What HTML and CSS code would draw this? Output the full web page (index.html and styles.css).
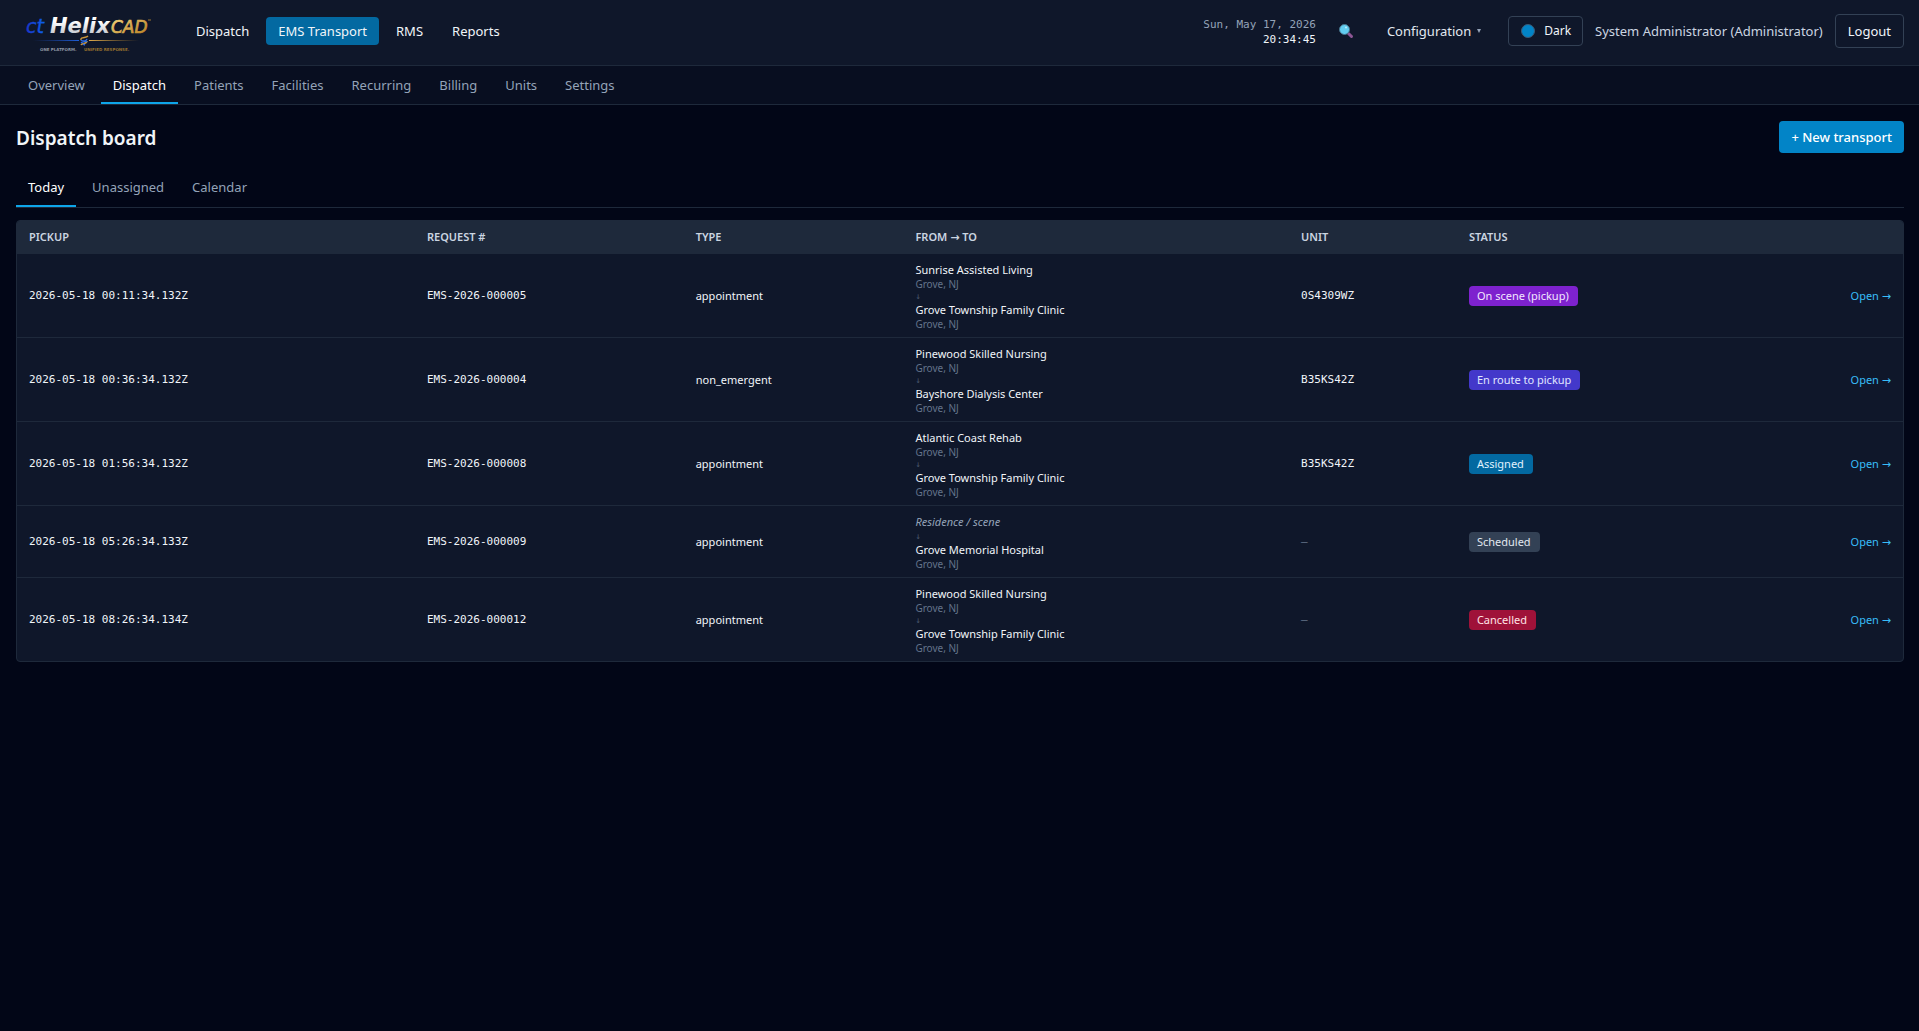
FILE: index.html
```html
<!DOCTYPE html>
<html lang="en">
<head>
<meta charset="utf-8">
<meta name="viewport" content="width=device-width, initial-scale=1">
<title>Dispatch board</title>
<link rel="stylesheet" href="styles.css">
</head>
<body>
<header class="topbar">
  <a class="logo" href="#" aria-label="ct HelixCAD">
    <svg width="138" height="48" viewBox="0 0 138 48">
      <defs>
        <linearGradient id="blue" x1="0" y1="0" x2="1" y2="0"><stop offset="0" stop-color="#1b35c8"/><stop offset="1" stop-color="#0b63ee"/></linearGradient>
        <linearGradient id="silver" x1="0" y1="0" x2="0" y2="1"><stop offset=".3" stop-color="#ffffff"/><stop offset="1" stop-color="#b4b8c0"/></linearGradient>
        <linearGradient id="gold" x1="0" y1="0" x2="1" y2="1"><stop offset="0" stop-color="#f6d880"/><stop offset="1" stop-color="#b57a1c"/></linearGradient>
        <linearGradient id="lineBlue" x1="0" y1="0" x2="1" y2="0"><stop offset="0" stop-color="#1746b8" stop-opacity="0"/><stop offset="1" stop-color="#1f5fd8"/></linearGradient>
        <linearGradient id="lineGold" x1="0" y1="0" x2="1" y2="0"><stop offset="0" stop-color="#e0ab4c"/><stop offset="1" stop-color="#b98429" stop-opacity="0"/></linearGradient>
      </defs>
      <text class="logo-ct" x="10" y="26" fill="url(#blue)" stroke="url(#blue)" stroke-width=".4">ct</text>
      <text class="logo-helix" x="34" y="26" fill="url(#silver)">Helix</text>
      <text class="logo-cad" x="95" y="26" fill="url(#gold)" stroke="url(#gold)" stroke-width=".7">CAD</text>
      <path d="M132 13h3" stroke="#9a7431"/>
      <rect x="17" y="33" width="46" height="1" fill="url(#lineBlue)"/>
      <rect x="73" y="33" width="50" height="1" fill="url(#lineGold)"/>
      <path d="M72 29c-2 2-8 1-7 4M71 34c0 3-5 2-6 4" fill="none" stroke="#c9963c" stroke-width="1.5"/>
      <path d="M65 33c1 2 5 0 6 2M65 36c2-2 5-1 6-4M67 37l2 1" fill="none" stroke="#2a6be0" stroke-width="1.4"/>
      <text class="logo-tag" x="24" y="44" fill="#8f96a3">ONE PLATFORM.</text>
      <text class="logo-tag" x="68" y="44" fill="#94702f">UNIFIED RESPONSE.</text>
    </svg>
  </a>
  <nav class="mainnav" aria-label="Modules">
    <a href="#">Dispatch</a>
    <a href="#" class="active" aria-current="page">EMS Transport</a>
    <a href="#">RMS</a>
    <a href="#">Reports</a>
  </nav>
  <div class="tools">
    <div class="clock">
      <span class="date">Sun, May 17, 2026</span>
      <time>20:34:45</time>
    </div>
    <button class="search" type="button" aria-label="Search">
      <svg width="16" height="16" viewBox="0 0 16 16">
        <path d="M10.500 10.500l3 3" stroke="#8d5694" stroke-width="3" stroke-linecap="round"/>
        <circle cx="6.500" cy="6.500" r="5" fill="#62cdf0" stroke="#49758c"/>
        <circle cx="8" cy="4.500" r="1" fill="#b9efff"/>
      </svg>
    </button>
    <button class="config" type="button">Configuration <svg width="6" height="6" viewBox="0 0 6 6"><path d="M1 1h4L3 5z" fill="#94a3b8"/></svg></button>
    <button class="theme" type="button"><svg width="14" height="14" viewBox="0 0 14 14"><circle cx="7" cy="7" r="6.500" fill="#0284c7" stroke="#3d5a75"/></svg>Dark</button>
    <span class="user">System Administrator (Administrator)</span>
    <button class="logout" type="button">Logout</button>
  </div>
</header>
<nav class="tabs subnav" aria-label="EMS Transport">
  <a href="#">Overview</a>
  <a href="#" class="active" aria-current="page">Dispatch</a>
  <a href="#">Patients</a>
  <a href="#">Facilities</a>
  <a href="#">Recurring</a>
  <a href="#">Billing</a>
  <a href="#">Units</a>
  <a href="#">Settings</a>
</nav>
<main>
  <div class="heading">
    <h1>Dispatch board</h1>
    <button class="new" type="button">+ New transport</button>
  </div>
  <nav class="tabs views" aria-label="Board views">
    <a href="#" class="active" aria-current="page">Today</a>
    <a href="#">Unassigned</a>
    <a href="#">Calendar</a>
  </nav>
  <div class="panel">
    <table>
      <colgroup><col class="c-pickup"><col class="c-request"><col class="c-type"><col class="c-route"><col class="c-unit"><col class="c-status"><col></colgroup>
      <thead>
        <tr><th>PICKUP</th><th>REQUEST #</th><th>TYPE</th><th>FROM <span class="glyph">→</span> TO</th><th>UNIT</th><th>STATUS</th><th></th></tr>
      </thead>
      <tbody>
        <tr>
          <td class="mono">2026-05-18 00:11:34.132Z</td><td class="mono">EMS-2026-000005</td><td>appointment</td>
          <td><div class="place">Sunrise Assisted Living</div><div class="town">Grove, NJ</div><div class="arrow">↓</div><div class="place">Grove Township Family Clinic</div><div class="town">Grove, NJ</div></td>
          <td class="mono">0S4309WZ</td><td><span class="badge onscene">On scene (pickup)</span></td><td class="open"><a href="#">Open <span class="glyph">→</span></a></td>
        </tr>
        <tr>
          <td class="mono">2026-05-18 00:36:34.132Z</td><td class="mono">EMS-2026-000004</td><td>non_emergent</td>
          <td><div class="place">Pinewood Skilled Nursing</div><div class="town">Grove, NJ</div><div class="arrow">↓</div><div class="place">Bayshore Dialysis Center</div><div class="town">Grove, NJ</div></td>
          <td class="mono">B35KS42Z</td><td><span class="badge enroute">En route to pickup</span></td><td class="open"><a href="#">Open <span class="glyph">→</span></a></td>
        </tr>
        <tr>
          <td class="mono">2026-05-18 01:56:34.132Z</td><td class="mono">EMS-2026-000008</td><td>appointment</td>
          <td><div class="place">Atlantic Coast Rehab</div><div class="town">Grove, NJ</div><div class="arrow">↓</div><div class="place">Grove Township Family Clinic</div><div class="town">Grove, NJ</div></td>
          <td class="mono">B35KS42Z</td><td><span class="badge assigned">Assigned</span></td><td class="open"><a href="#">Open <span class="glyph">→</span></a></td>
        </tr>
        <tr>
          <td class="mono">2026-05-18 05:26:34.133Z</td><td class="mono">EMS-2026-000009</td><td>appointment</td>
          <td><div class="place scene">Residence / scene</div><div class="arrow">↓</div><div class="place">Grove Memorial Hospital</div><div class="town">Grove, NJ</div></td>
          <td class="mono none">—</td><td><span class="badge scheduled">Scheduled</span></td><td class="open"><a href="#">Open <span class="glyph">→</span></a></td>
        </tr>
        <tr>
          <td class="mono">2026-05-18 08:26:34.134Z</td><td class="mono">EMS-2026-000012</td><td>appointment</td>
          <td><div class="place">Pinewood Skilled Nursing</div><div class="town">Grove, NJ</div><div class="arrow">↓</div><div class="place">Grove Township Family Clinic</div><div class="town">Grove, NJ</div></td>
          <td class="mono none">—</td><td><span class="badge cancelled">Cancelled</span></td><td class="open"><a href="#">Open <span class="glyph">→</span></a></td>
        </tr>
      </tbody>
    </table>
  </div>
</main>
</body>
</html>
```
FILE: styles.css
```css
* { box-sizing: border-box; }
body {
  margin: 0;
  min-height: 100vh;
  background: #020617;
  color: #f1f5f9;
  font: 13px/20px "Noto Sans", "Open Sans", sans-serif;
}
a { color: inherit; text-decoration: none; }
button {
  font: inherit;
  color: inherit;
  background: none;
  border: 0;
  padding: 0;
  cursor: pointer;
  white-space: nowrap;
}
svg { display: block; }

.topbar {
  display: flex;
  align-items: center;
  height: 66px;
  padding: 0 15px 3px 16px;
  background: #0f172a;
  border-bottom: 1px solid #1e293b;
}
.logo { margin-right: 30px; }
.logo-ct { font: italic 19px "DejaVu Sans", sans-serif; }
.logo-helix { font: italic bold 21px "DejaVu Sans", sans-serif; }
.logo-cad { font: italic 17px "DejaVu Sans", sans-serif; }
.logo-tag { font: bold 4px "DejaVu Sans", sans-serif; }

.mainnav { display: flex; gap: 5px; }
.mainnav a { padding: 4px 12px; border-radius: 4px; white-space: nowrap; }
.mainnav .active { background: #0369a1; }

.tools { display: flex; align-items: center; margin-left: auto; white-space: nowrap; }
.clock {
  display: flex;
  flex-direction: column;
  align-items: flex-end;
  padding-top: 2px;
  font: 11px/15px "DejaVu Sans Mono", monospace;
  color: #94a3b8;
}
.clock time { color: #f1f5f9; }
.search { margin-left: 22px; }
.config { display: flex; align-items: center; gap: 5px; margin-left: 33px; color: #e2e8f0; }
.theme {
  display: flex;
  align-items: center;
  gap: 9px;
  height: 30px;
  margin-left: 26px;
  padding: 0 11px 0 12px;
  border: 1px solid #334155;
  border-radius: 4px;
  font-size: 12px;
}
.user { margin: 0 12px; color: #cbd5e1; }
.logout { height: 34px; padding: 0 12px; border: 1px solid #334155; border-radius: 4px; }

.tabs { display: flex; gap: 4px; border-bottom: 1px solid #1e293b; color: #94a3b8; }
.tabs a { padding: 9px 12px 8px; border-bottom: 2px solid transparent; }
.tabs .active { color: #fff; border-color: #0ea5e9; }
.subnav { padding: 0 16px; background: #080e20; height: 39px; }

main { padding: 16px 15px 16px 16px; }
.heading { display: flex; align-items: center; justify-content: space-between; }
h1 { margin: 0; padding-top: 2px; font-size: 19px; line-height: 28px; font-weight: 600; }
.new { height: 32px; padding: 0 12px; border-radius: 4px; background: #0284c7; color: #fff; font-weight: 500; }
.views { margin: 15px 0 12px; }

.panel { border: 1px solid #1e293b; border-radius: 4px; overflow: hidden; background: #0f172a; }
table { width: 100%; table-layout: fixed; border-collapse: collapse; font-size: 11px; line-height: 16px; }
.c-pickup { width: 21.1%; }
.c-request { width: 14.25%; }
.c-type { width: 11.65%; }
.c-route { width: 20.45%; }
.c-unit { width: 8.9%; }
.c-status { width: 15%; }
th { padding: 8px 12px 9px; text-align: left; font-weight: 600; background: #1e293b; color: #cbd5e1; }
td { padding: 8px 12px 7px; vertical-align: middle; }
tbody tr + tr { border-top: 1px solid #1e293b; }
.mono { font-family: "DejaVu Sans Mono", monospace; }
.none { color: #64748b; }
.scene { font-style: italic; color: #94a3b8; }
.town { font-size: 10px; line-height: 12px; color: #64748b; }
.arrow { font: 9px/12px "DejaVu Sans Mono", monospace; color: #475569; }
.glyph { font-family: "DejaVu Sans", sans-serif; line-height: 1; }
.badge { display: inline-block; padding: 2px 9px 2px 8px; border-radius: 4px; }
.onscene { background: #7e22ce; color: #f3e8ff; }
.enroute { background: #4338ca; color: #e0e7ff; }
.assigned { background: #0369a1; color: #e0f2fe; }
.scheduled { background: #334155; color: #e2e8f0; }
.cancelled { background: #9f1239; color: #ffe4e6; }
.open { text-align: right; color: #38bdf8; }
```
